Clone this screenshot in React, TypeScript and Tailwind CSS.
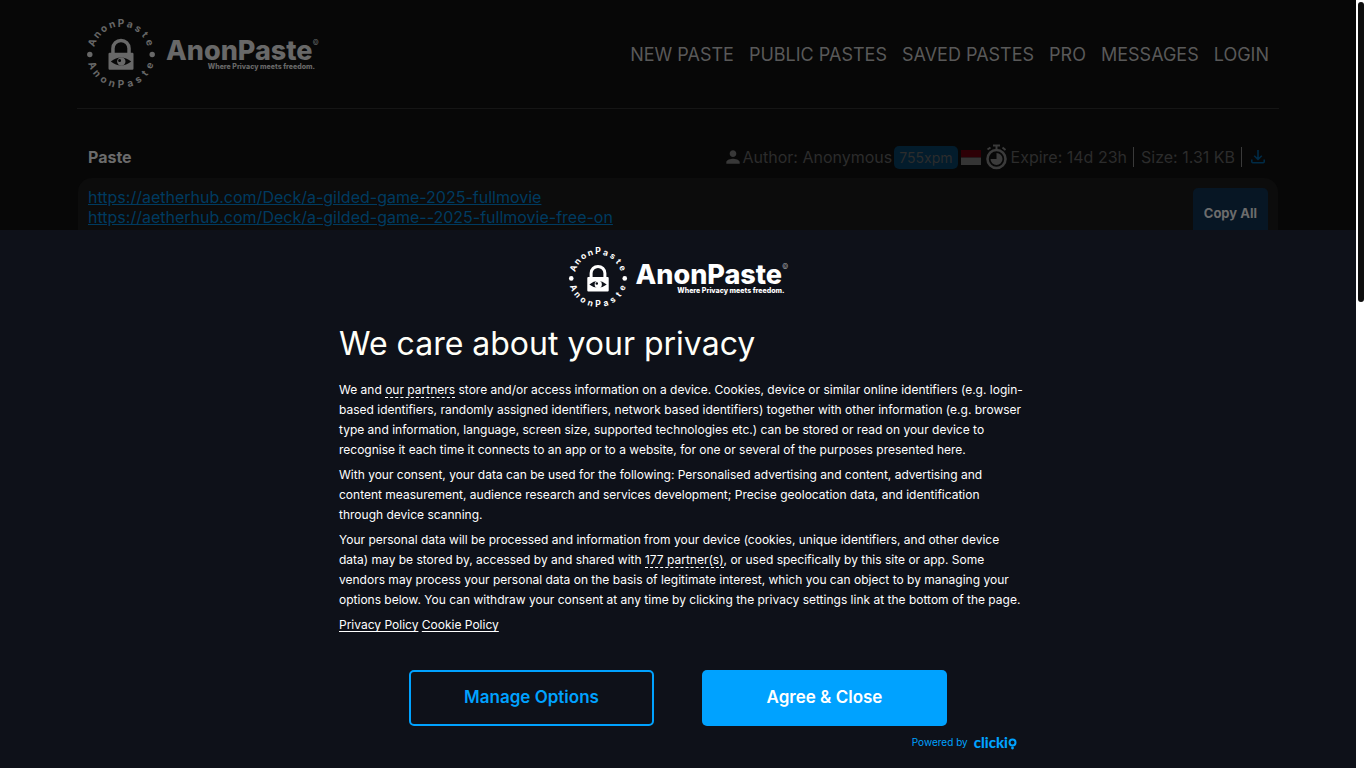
import { MdPerson } from "react-icons/md";

const FONT = "font-['Inter','Liberation_Sans',sans-serif]";

const RING_LETTERS = "AnonPaste".split("");
const NAV = ["NEW PASTE", "PUBLIC PASTES", "SAVED PASTES", "PRO", "MESSAGES", "LOGIN"];

const PASTE_LINKS = [
  "https://aetherhub.com/Deck/a-gilded-game-2025-fullmovie",
  "https://aetherhub.com/Deck/a-gilded-game--2025-fullmovie-free-on",
];

function Ring({ className }: { className: string }) {
  return (
    <svg viewBox="0 0 70 70" className={className} fill="currentColor" aria-hidden="true">
      <g fontSize="10" fontWeight="700" textAnchor="middle">
        {RING_LETTERS.map((letter, i) => (
          <text key={"t" + i} x="35" y="7.5" transform={`rotate(${-68 + i * 17} 35 35)`}>
            {letter}
          </text>
        ))}
        {RING_LETTERS.map((letter, i) => (
          <text key={"b" + i} x="35" y="69" transform={`rotate(${68 - i * 17} 35 35)`}>
            {letter}
          </text>
        ))}
      </g>
      <circle cx="3.8" cy="35.5" r="2.7" />
      <circle cx="66.2" cy="35.5" r="2.7" />
      <path d="M25.2 34V29.5a9.8 9.8 0 0 1 19.6 0V34h-3.5v-4.5a6.3 6.3 0 0 0-12.6 0V34Z" />
      <path
        fillRule="evenodd"
        d="M23.7 33.7h22.6a1.2 1.2 0 0 1 1.2 1.2v14.7a1.2 1.2 0 0 1-1.2 1.2H23.7a1.2 1.2 0 0 1-1.2-1.2V34.9a1.2 1.2 0 0 1 1.2-1.2ZM24.8 42.5Q30 38.5 35 38.5T45.2 42.5Q40 46.5 35 46.5T24.8 42.5Z"
      />
      <path
        fillRule="evenodd"
        d="M35.3 38.3a4.2 4.2 0 1 0 0 8.4 4.2 4.2 0 0 0 0-8.4ZM33.6 39.9a1.5 1.5 0 1 0 0 3 1.5 1.5 0 0 0 0-3Z"
      />
    </svg>
  );
}

function Wordmark({ markClass }: { markClass: string }) {
  return (
    <span className="flex flex-col items-end">
      <span className="flex items-start">
        <span className="text-[27px] leading-[24px] font-extrabold">AnonPaste</span>
        <span className={markClass}>©</span>
      </span>
      <span className="pr-1 text-[7px] leading-[7px] font-extrabold">Where Privacy meets freedom.</span>
    </span>
  );
}

function HeaderLogo() {
  return (
    <a href="#home" className="flex items-center gap-[10px] text-[#686868]">
      <Ring className="size-[70px] overflow-visible" />
      <Wordmark markClass="text-[7px] leading-[8px]" />
    </a>
  );
}

function DialogLogo() {
  return (
    <div className="flex items-center justify-center gap-2 text-white">
      <Ring className="size-[60px] overflow-visible" />
      <Wordmark markClass="text-[7px] leading-[8px] text-[#a0a2a6]" />
    </div>
  );
}

function Stopwatch() {
  return (
    <svg viewBox="0 0 24 28" className="h-[28px] w-[24px]" fill="none" stroke="currentColor" aria-hidden="true">
      <circle cx="11.5" cy="16" r="9" strokeWidth="2.6" />
      <path d="M8 2.5h7M11.5 3v4M2.5 6.5l3-2M17.5 4.5l3 2.5" strokeWidth="2" />
      <path d="M11.5 10a6 6 0 1 1-6 6h6Z" fill="currentColor" stroke="none" />
    </svg>
  );
}

function Download() {
  return (
    <svg viewBox="0 0 16 16" className="size-4 text-[#002b46]" fill="none" stroke="currentColor" strokeWidth="1.6" aria-hidden="true">
      <path d="M8 1v9M4.2 6.7 8 10.4l3.8-3.7M1.8 10.5v2.3q0 1 1 1h10.4q1 0 1-1v-2.3" />
    </svg>
  );
}

function PasteMeta() {
  return (
    <div className="flex items-center text-[16px] leading-[28px] text-[#2c2c2c]">
      <MdPerson className="size-5 text-[#383838]" aria-hidden="true" />
      <span>Author: Anonymous</span>
      <span className="ml-[2px] rounded-[5px] bg-[#031c2c] px-[5px] text-[14px] leading-[23px]">755xpm</span>
      <svg viewBox="0 0 20 15" className="ml-[3px] h-[15px] w-5" role="img" aria-label="Indonesia">
        <path d="M0 0h20v7.5H0z" fill="#2d0006" />
        <path d="M0 7.5h20V15H0z" fill="#353535" />
      </svg>
      <span className="mr-[2px] ml-1 text-[#3b3b3b]">
        <Stopwatch />
      </span>
      <span>Expire: 14d 23h</span>
      <span className="mr-[7px] ml-[6px] h-5 w-px bg-[#3a3a3a]" />
      <span>Size: 1.31 KB</span>
      <span className="mr-2 ml-[6px] h-5 w-px bg-[#3a3a3a]" />
      <a href="#download" aria-label="Download">
        <Download />
      </a>
    </div>
  );
}

function Clickio() {
  return (
    <a href="#clickio" aria-label="clickio" className="flex items-center">
      <span className="font-['Lato','Open_Sans',sans-serif] text-[15px] leading-4 font-black">clicki</span>
      <svg viewBox="0 0 9 16" className="h-4 w-[9px]" aria-hidden="true">
        <circle cx="4.5" cy="8.5" r="3" fill="none" stroke="currentColor" strokeWidth="2" />
        <circle cx="4.5" cy="14" r="1.4" fill="currentColor" />
      </svg>
    </a>
  );
}

function PrivacyDialog() {
  return (
    <section
      role="dialog"
      aria-labelledby="privacy-title"
      className="absolute inset-x-0 bottom-0 bg-[#0e1119] px-4 py-[18px] text-white"
    >
      <div className="mx-auto max-w-[678px]">
        <DialogLogo />
        <h2 id="privacy-title" className="mt-4 text-[32px] leading-[40px] text-[#fffff8]">
          We care about your privacy
        </h2>
        <div className="mt-4 -mr-[10px] flex flex-col gap-[5px] text-[12px] leading-[20px]">
          <p>
            We and{" "}
            <a href="#partners" className="border-b border-dashed border-white">
              our partners
            </a>{" "}
            store and/or access information on a device. Cookies, device or similar online identifiers (e.g.
            login-<wbr />based identifiers, randomly assigned identifiers, network based identifiers) together with other
            information (e.g. browser type and information, language, screen size, supported technologies etc.) can be
            stored or read on your device to recognise it each time it connects to an app or to a website, for one or
            several of the purposes presented here.
          </p>
          <p>
            With your consent, your data can be used for the following: Personalised advertising and content, advertising
            and content measurement, audience research and services development; Precise geolocation data, and
            identification through device scanning.
          </p>
          <p>
            Your personal data will be processed and information from your device (cookies, unique identifiers, and other
            device data) may be stored by, accessed by and shared with{" "}
            <a href="#vendors" className="border-b border-dashed border-white">
              177 partner(s)
            </a>
            , or used specifically by this site or app. Some vendors may process your personal data on the basis of
            legitimate interest, which you can object to by managing your options below. You can withdraw your consent at
            any time by clicking the privacy settings link at the bottom of the page.
          </p>
          <p>
            <a href="#privacy" className="underline underline-offset-2">
              Privacy Policy
            </a>{" "}
            <a href="#cookies" className="underline underline-offset-2">
              Cookie Policy
            </a>
          </p>
        </div>
        <div className="mt-[35px] flex justify-center gap-12 text-[17px] font-semibold">
          <button type="button" className="h-14 w-[245px] rounded-[5px] border-2 border-[#00a2ff] text-[#00a2ff]">
            Manage Options
          </button>
          <button type="button" className="h-14 w-[245px] rounded-[5px] bg-[#00a2ff] text-white">
            Agree &amp; Close
          </button>
        </div>
        <div className="mt-2 flex items-center justify-end gap-[6px] text-[10px] leading-[16px] text-[#00a2ff]">
          <span>Powered by</span>
          <Clickio />
        </div>
      </div>
    </section>
  );
}

export default function App() {
  return (
    <div className={`flex h-screen overflow-hidden bg-white ${FONT}`}>
      <div className="relative flex-1 overflow-hidden bg-[#070707]">
        <div className="mx-auto max-w-[1202px]">
          <header className="flex h-[109px] items-center justify-between border-b border-[#151515] pr-[10px] pl-[9px]">
            <HeaderLogo />
            <nav className="flex gap-[15px] pt-[2px] text-[18px] leading-6 text-[#595959]">
              {NAV.map((item) => (
                <a key={item} href="#nav">
                  {item}
                </a>
              ))}
            </nav>
          </header>
          <main className="mt-[34px]">
            <div className="flex items-center justify-between pr-[13px] pl-[11px]">
              <h1 className="text-[16px] leading-[28px] font-bold text-[#6b6b6b]">Paste</h1>
              <PasteMeta />
            </div>
            <div className="mx-px mt-[7px] flex h-[400px] items-start justify-between rounded-[14px] bg-[#0c0c0c] px-[10px] pt-[9px]">
              <div className="flex flex-col text-[16px] leading-5 text-[#003b60]">
                {PASTE_LINKS.map((link) => (
                  <a key={link} href={link} className="underline">
                    {link}
                  </a>
                ))}
              </div>
              <button type="button" className="mt-px h-[52px] rounded-[5px] bg-[#071624] px-[11px] text-[13px] font-bold text-[#6c6c6c]">
                Copy All
              </button>
            </div>
          </main>
        </div>
        <PrivacyDialog />
      </div>
      <div className="w-[10px] bg-white px-[2px] pt-[2px]" aria-hidden="true">
        <div className="h-[39vh] rounded-full bg-[#0e0e0e]" />
      </div>
    </div>
  );
}
